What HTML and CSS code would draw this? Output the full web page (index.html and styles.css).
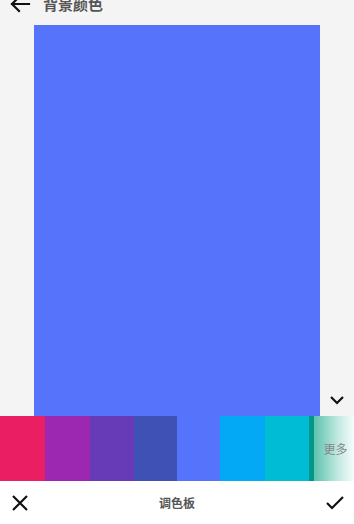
FILE: index.html
```html
<!DOCTYPE html>
<html lang="zh">
<head>
<meta charset="utf-8">
<link rel="stylesheet" href="styles.css">
</head>
<body>
<div class="app">
  <header class="topbar">
    <svg class="back" width="22" height="18" viewBox="0 0 22 18"><path d="M20 9H3M10 2L3 9l7 7" fill="none" stroke="#111" stroke-width="2.2" stroke-linecap="square"/></svg>
    <span class="title">背景颜色</span>
  </header>
  <div class="stage">
    <div class="preview"></div>
    <div class="side">
      <svg width="16" height="10" viewBox="0 0 16 10"><path d="M2 2l6 6 6-6" fill="none" stroke="#111" stroke-width="2.2"/></svg>
    </div>
  </div>
  <div class="swatches">
    <div class="sw pink"></div>
    <div class="sw purple"></div>
    <div class="sw deep"></div>
    <div class="sw indigo"></div>
    <div class="sw blue"></div>
    <div class="sw light"></div>
    <div class="sw cyan"></div>
    <div class="sw teal"></div>
    <div class="more">更多</div>
  </div>
  <footer class="bottombar">
    <svg width="18" height="18" viewBox="0 0 18 18"><path d="M2 2l14 14M16 2L2 16" stroke="#111" stroke-width="2.2"/></svg>
    <span class="label">调色板</span>
    <svg width="20" height="16" viewBox="0 0 20 16"><path d="M2 8l5 5L18 2" fill="none" stroke="#111" stroke-width="2.2"/></svg>
  </footer>
</div>
</body>
</html>
```
FILE: styles.css
```css
html, body { margin: 0; padding: 0; }
body {
  width: 354px;
  height: 524px;
  overflow: hidden;
  background: #f4f4f4;
  font-family: "Noto Sans CJK SC", "Noto Sans", sans-serif;
}
.app { display: flex; flex-direction: column; height: 524px; }
.topbar {
  height: 18px;
  margin-top: -5px;
  display: flex;
  align-items: center;
  padding-left: 9px;
  gap: 12px;
}
.title { font-size: 15px; font-weight: 700; color: #555; line-height: 18px; }
.stage { display: flex; margin-top: 12px; }
.preview { margin-left: 34px; width: 286px; height: 391px; background: #5573fb; }
.side {
  flex: 1;
  display: flex;
  align-items: flex-end;
  justify-content: center;
  padding-bottom: 11px;
}
.swatches { display: flex; height: 65px; }
.sw { height: 100%; }
.pink { width: 45px; background: #e91e63; }
.purple { width: 45px; background: #9c27b0; }
.deep { width: 44px; background: #673ab7; }
.indigo { width: 43px; background: #3f51b5; }
.blue { width: 43px; background: #5573fb; }
.light { width: 45px; background: #03a9f4; }
.cyan { width: 44px; background: #00bcd4; }
.teal { width: 5px; background: #009688; }
.more {
  flex: 1;
  display: flex;
  align-items: center;
  justify-content: center;
  padding-left: 3px;
  font-size: 12px;
  color: #888;
  background: linear-gradient(to right, #5cc2ae, #c2e9e1 60%, #f7fcfb);
}
.bottombar {
  flex: 1;
  background: #fff;
  display: flex;
  align-items: center;
  justify-content: space-between;
  padding: 0 9px 0 11px;
}
.label { font-size: 12px; color: #555; font-weight: 700; }
```
